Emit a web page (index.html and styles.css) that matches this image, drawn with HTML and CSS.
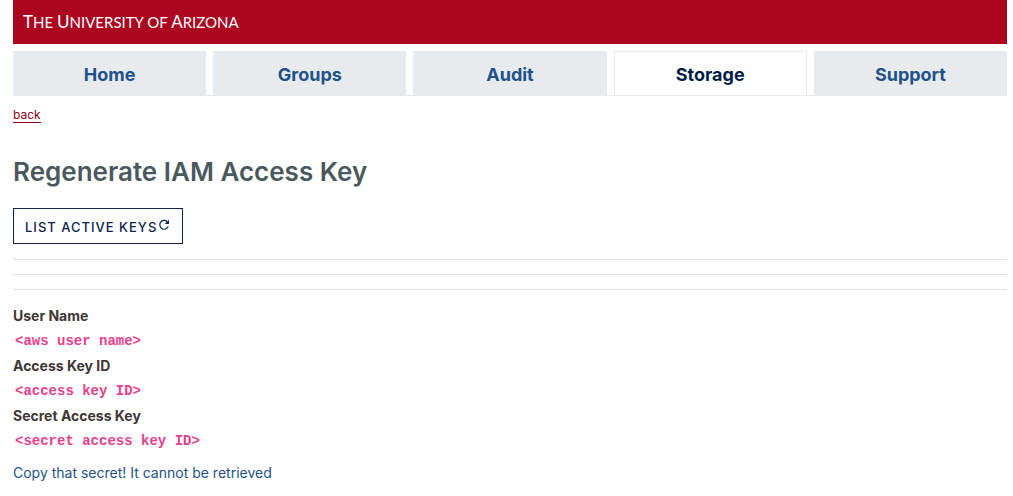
FILE: index.html
```html
<!DOCTYPE html>
<html lang="en">
<head>
<meta charset="utf-8">
<title>Regenerate IAM Access Key</title>
<link rel="stylesheet" href="styles.css">
</head>
<body>
<header class="banner">
  <span class="wordmark"><span class="cap">T</span>HE <span class="cap">U</span>NIVERSITY OF <span class="cap">A</span>RIZONA</span>
</header>
<nav class="tabs">
  <a class="tab" href="#home">Home</a>
  <a class="tab" href="#groups">Groups</a>
  <a class="tab" href="#audit">Audit</a>
  <a class="tab tab-active" href="#storage" aria-current="page">Storage</a>
  <a class="tab" href="#support">Support</a>
</nav>
<main>
  <a class="back" href="#back">back</a>
  <h1 class="title">Regenerate IAM Access Key</h1>
  <button class="list-button" type="button">LIST ACTIVE KEYS<svg class="refresh" viewBox="0 0 12 12" aria-hidden="true"><path d="M9.3 2.7A4.4 4.4 0 1 0 10.3 7.4" fill="none" stroke="currentColor" stroke-width="1.2"/><path d="M11 .8V5H6.7Z" fill="currentColor"/></svg></button>
  <hr class="rule"><hr class="rule"><hr class="rule">
  <dl class="keys">
    <dt>User Name</dt>
    <dd><code>&lt;aws user name&gt;</code></dd>
    <dt>Access Key ID</dt>
    <dd><code>&lt;access key ID&gt;</code></dd>
    <dt>Secret Access Key</dt>
    <dd><code>&lt;secret access key ID&gt;</code></dd>
  </dl>
  <p class="note">Copy that secret! It cannot be retrieved</p>
</main>
</body>
</html>
```
FILE: styles.css
```css
* { box-sizing: border-box; }
body {
  margin: 0;
  padding: 0 6px 0 13px;
  background: #fff;
  color: #403635;
  font: 14px/20px Inter, "Liberation Sans", sans-serif;
}
.banner {
  display: flex;
  align-items: center;
  height: 44px;
  padding: 0 10px;
  background: #ab0520;
  color: #fff;
}
.wordmark { font: 15px/20px Lato, sans-serif; }
.cap { font-size: 17px; }
.tabs {
  display: grid;
  grid-template-columns: repeat(5, 1fr);
  gap: 7px;
  margin-top: 7px;
  border-bottom: 1px solid #e7ebee;
}
.tab {
  padding: 11px 0 9px;
  border: 1px solid #e7ebee;
  border-bottom: 0;
  background: #e7ebee;
  color: #1e5288;
  font-size: 18px;
  line-height: 23px;
  font-weight: 700;
  text-align: center;
  text-decoration: none;
}
.tab-active { background: #fff; color: #001c48; }
.back {
  display: inline-block;
  margin-top: 12px;
  border-bottom: 1px solid #8b0015;
  color: #8b0015;
  font-size: 12px;
  line-height: 14px;
  text-decoration: none;
}
.title {
  margin: 30px 0 18px;
  color: #49595e;
  font-size: 26px;
  line-height: 36px;
  font-weight: 600;
}
.list-button {
  display: flex;
  height: 36px;
  padding: 8px 12px 8px 11px;
  border: 1px solid #0c234b;
  background: #fff;
  color: #0c234b;
  font: 500 13px/20px Inter, sans-serif;
  letter-spacing: 1px;
}
.refresh { width: 12px; height: 12px; margin: 2px 0 0 1px; }
.rule {
  height: 1px;
  margin: 14px 0 0;
  border: 0;
  background: #e2e2e2;
}
.list-button + .rule { margin-top: 15px; }
.keys { margin: 16px 0 0; font-weight: 700; }
.keys dd { margin: 5px 0; padding-left: 2px; }
.keys code {
  display: block;
  color: #e83e8c;
  font: 700 14px/20px "Liberation Mono", monospace;
}
.note { margin: 12px 0 0; color: #1e5288; }
```
